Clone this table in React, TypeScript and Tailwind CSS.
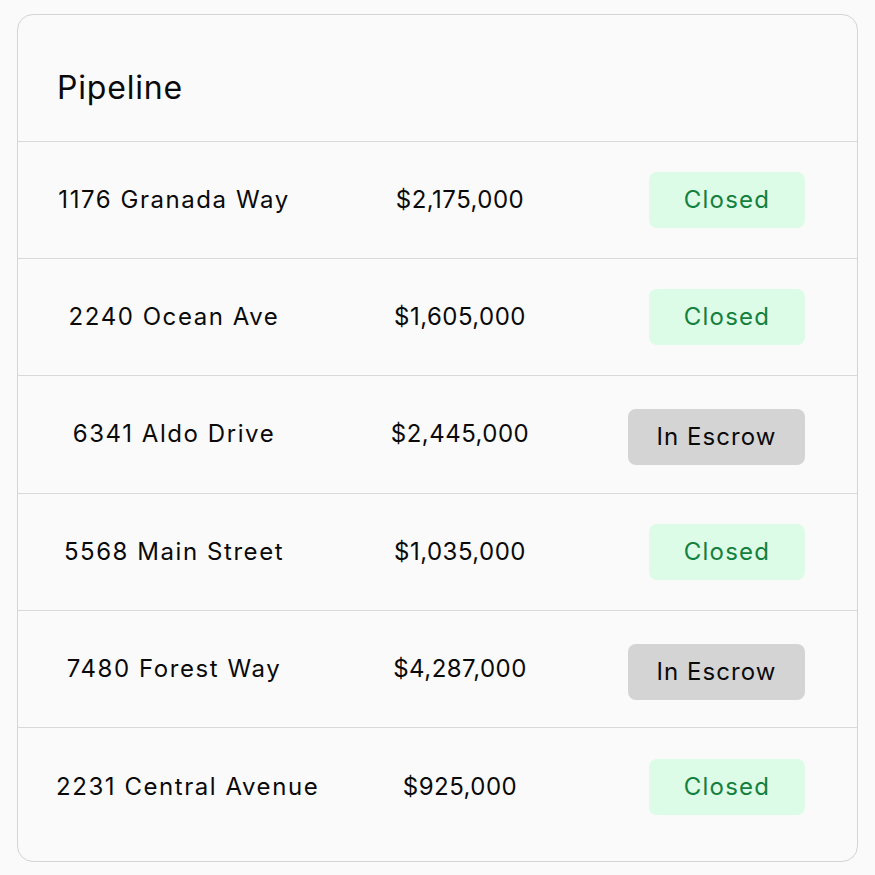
const deals = [
  { address: "1176 Granada Way", price: "$2,175,000", status: "Closed" },
  { address: "2240 Ocean Ave", price: "$1,605,000", status: "Closed" },
  { address: "6341 Aldo Drive", price: "$2,445,000", status: "In Escrow" },
  { address: "5568 Main Street", price: "$1,035,000", status: "Closed" },
  { address: "7480 Forest Way", price: "$4,287,000", status: "In Escrow" },
  { address: "2231 Central Avenue", price: "$925,000", status: "Closed" },
]

function StatusBadge({ status }: { status: string }) {
  if (status === "Closed") {
    return (
      <span className="flex h-[56px] w-[156px] items-center justify-center rounded-lg bg-[#dcfce7] tracking-[0.05em] text-[#15803d]">
        Closed
      </span>
    )
  }
  return (
    <span className="mt-[6px] flex h-[56px] w-[177px] items-center justify-center rounded-lg bg-[#d4d4d4] tracking-[0.045em] text-[#0a0a0a]">
      {status}
    </span>
  )
}

export default function App() {
  return (
    <div className="min-h-[875px] bg-[#fafafa] px-[17px] pt-[14px] font-['Inter',sans-serif] text-[#0a0a0a]">
      <div className="overflow-hidden rounded-2xl border border-[#d4d4d4] bg-[#fafafa]">
        <div className="flex h-[127px] items-center border-b border-[#d9d9d9] px-[39px] pt-[20px]">
          <h2 className="text-[32px] font-normal tracking-[0.025em]">Pipeline</h2>
        </div>
        <div className="pb-[16px]">
          {deals.map((d, i) => (
            <div
              key={d.address}
              className={
                "grid h-[117.2px] grid-cols-[312px_260px_1fr] items-center text-[24px] " +
                (i < deals.length - 1 ? "border-b border-[#d9d9d9]" : "")
              }
            >
              <div className="px-[38px] text-center whitespace-nowrap tracking-[0.065em]">{d.address}</div>
              <div className="text-center tracking-[0.02em]">{d.price}</div>
              <div className="flex justify-end pr-[52px]">
                <StatusBadge status={d.status} />
              </div>
            </div>
          ))}
        </div>
      </div>
    </div>
  )
}
